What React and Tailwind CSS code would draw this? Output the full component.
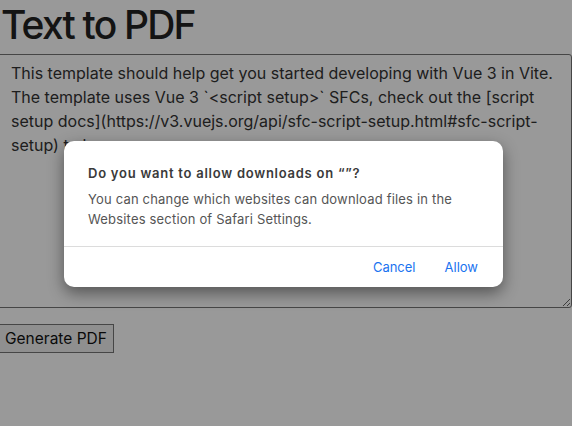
import React from "react";

const text =
  "This template should help get you started developing with Vue 3 in Vite.\nThe template uses Vue 3 `<script setup>` SFCs, check out the [script setup docs](https://v3.vuejs.org/api/sfc-script-setup.html#sfc-script-setup) to learn more.";

export default function App() {
  return (
    <div
      className="relative h-[426px] w-[572px] overflow-hidden bg-white"
      style={{ fontFamily: "Inter, 'Noto Sans', sans-serif" }}
    >
      <div className="-ml-[3px] flex w-[575px] flex-col">
        <h1 className="mt-[1px] h-[53px] pl-[4px] text-[39px] font-medium leading-[48px] tracking-[-1.8px] text-[#222]">
          Text to PDF
        </h1>
        <textarea
          readOnly
          value={text}
          className="h-[254px] w-[575px] resize-y rounded-[3px] border border-[#767676] bg-white px-[13px] pt-[6px] text-[16px] leading-[24px] text-[#333] outline-none"
          style={{ fontFamily: "Inter, 'Noto Sans', sans-serif" }}
        />
        <div className="mt-[16px] flex">
          <button className="h-[29px] border border-[#767676] bg-[#efefef] pl-[7px] pr-[6px] text-[15.5px] leading-[20px] text-[#111]">
            Generate PDF
          </button>
        </div>
      </div>

      <div className="absolute inset-0 bg-black/40" />

      <div className="absolute left-[64px] top-[141px] w-[439px] rounded-[10px] bg-white shadow-[0_6px_16px_rgba(0,0,0,0.45)]">
        <div className="px-[24px] pt-[23px] pb-[17px]">
          <div className="text-[13px] font-semibold leading-[18px] tracking-[0.75px] text-[#3a3a3a]">
            Do you want to allow downloads on “”?
          </div>
          <div className="mt-[7px] text-[13px] leading-[20px] tracking-[0.18px] text-[#555]">
            You can change which websites can download files in the Websites section of Safari Settings.
          </div>
        </div>
        <div className="h-px bg-[#dcdcdc]" />
        <div className="flex h-[40px] items-center justify-end gap-[29px] pr-[25px] pt-[2px] text-[13px] text-[#1a73f0]">
          <span>Cancel</span>
          <span>Allow</span>
        </div>
      </div>
    </div>
  );
}
